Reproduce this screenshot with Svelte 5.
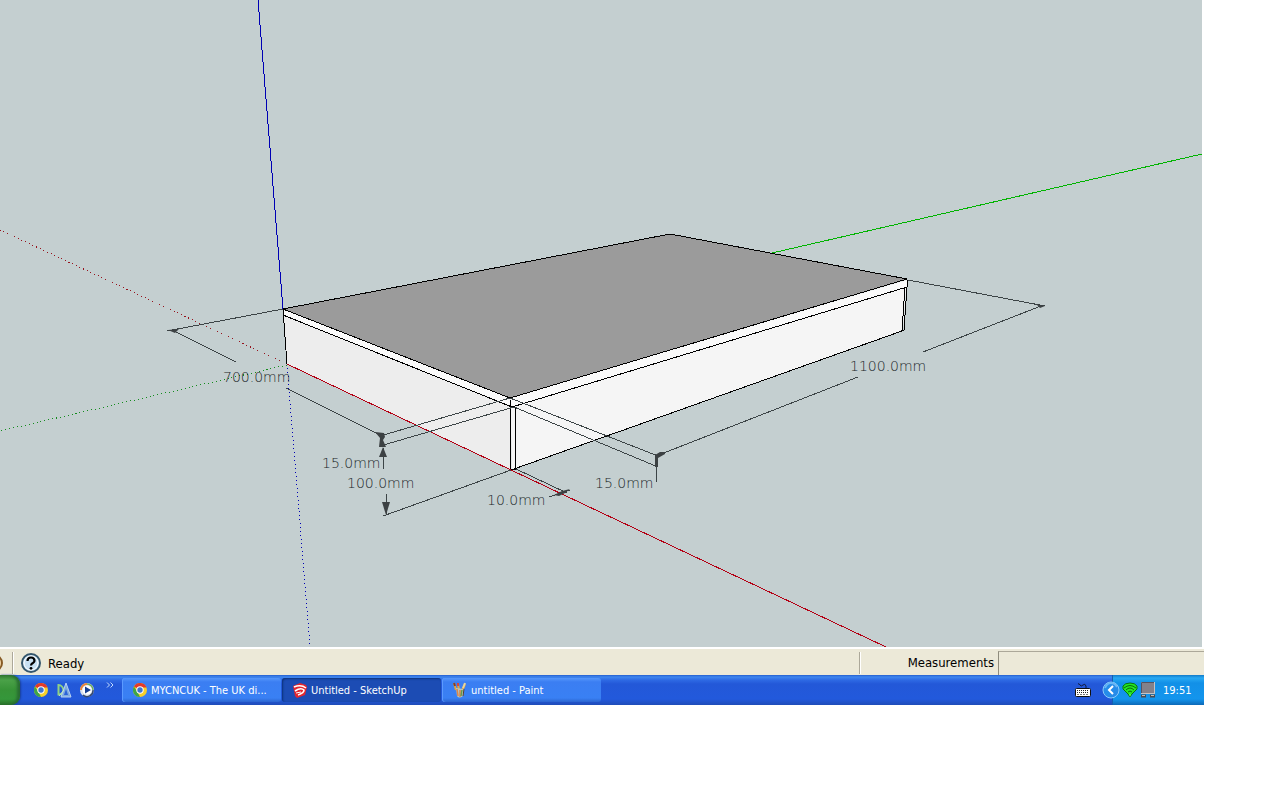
<script lang="ts">
	// measurement labels, x is the left edge and y the baseline
	const labels = [
		{ text: '700.0mm', x: 223, y: 382 },
		{ text: '15.0mm', x: 322, y: 468 },
		{ text: '100.0mm', x: 347, y: 488 },
		{ text: '10.0mm', x: 487, y: 505 },
		{ text: '15.0mm', x: 595, y: 488 },
		{ text: '1100.0mm', x: 850, y: 371 },
	];

	const edges = [
		'M283 309L670 234L907 279L510 398Z',
		'M283 315L512 407L907 287V280',
		'M283 309L287 364',
		'M510 398L511 469L516 469L515 407',
		'M514 469L902 331L905 287',
		'M901 331L904 330L907 287',
	];

	const dimensions = [
		'M283 309L167 331M172 330L236 362M286 388L380 435',
		'M510 398L380 436M514 407L380 446',
		'M382 436V446M383 448V469M386 494V514M511 470L383 516',
		'M510 398L658 456M514 407L658 467M656 456V482',
		'M516 469L567 493M549 497L570 490',
		'M656 456L858 377M923 352L1041 306M908 280L1045 306',
	];

	let tasks = [
		{ name: 'MYCNCUK - The UK di...', icon: 'chrome', active: false },
		{ name: 'Untitled - SketchUp', icon: 'sketchup', active: true },
		{ name: 'untitled - Paint', icon: 'paint', active: false },
	];
</script>

<svelte:head>
	<title>Untitled - SketchUp</title>
</svelte:head>

{#snippet icon(name)}
	<svg class="icon" viewBox="0 0 16 16" aria-hidden="true">
		{#if name === 'chrome'}
			<circle cx="8" cy="8" r="7" fill="#f6cf2b" />
			<path d="M8 8L2 4.4A7 7 0 0 1 14.6 5.5H8Z" fill="#e23a2c" />
			<path d="M2 4.4L6 11L8 15A7 7 0 0 1 2 4.4Z" fill="#3fa548" />
			<circle cx="8" cy="8" r="3.7" fill="#fff" />
			<circle cx="8" cy="8" r="2.7" fill="#3d74cf" />
		{:else if name === 'draft'}
			<path d="M2.5 3V12.5C10 13 8 3 2.5 3Z" fill="none" stroke="#8fd184" stroke-width="2" />
			<path d="M10 1L15 15H5Z" fill="#7daae0" stroke="#b8d2f2" />
			<path d="M10 7L12 13H8Z" fill="#2c63d7" />
			<path d="M3 14L8 8" stroke="#c7e8c3" />
		{:else if name === 'player'}
			<circle cx="8" cy="8" r="7" fill="#d8dfeb" />
			<path d="M2 8A6 6 0 0 1 8 2" fill="none" stroke="#e98437" stroke-width="2" />
			<path d="M8 2A6 6 0 0 1 14 8" fill="none" stroke="#6cac5a" stroke-width="1.5" />
			<path d="M14 8A6 6 0 0 1 4 13" fill="none" stroke="#35496f" stroke-width="1.5" />
			<circle cx="8" cy="8" r="4.6" fill="#fff" />
			<path d="M6 4.5L12 8L6 11.5Z" fill="#173f91" />
		{:else if name === 'sketchup'}
			<path d="M1 4L8 1L14 3L15 5L13 13L5 16L3 14L2 9Z" fill="#e3262f" />
			<path d="M2 5Q9 2 14 6" fill="none" stroke="#fff" stroke-width="1.6" />
			<path d="M3 9Q9 5 12 8Q12 11 6 13" fill="none" stroke="#fff" stroke-width="1.6" />
			<path d="M4 11L9 10" stroke="#fff" />
		{:else if name === 'paint'}
			<path d="M4 8L2 1M7 8L6 2M10 9L13 2" stroke="#e9a63b" stroke-width="2" />
			<path d="M2 1L3 4" stroke="#80402d" stroke-width="2" />
			<path d="M6 1V4" stroke="#d84539" stroke-width="2" />
			<path d="M13 1L11 6" stroke="#e9d79d" stroke-width="2" />
			<path d="M4 6L12 7L11 14Q7 17 5 14Z" fill="#b5c5bd" />
			<path d="M5 7L6 14M8 8V15" stroke="#dd8448" stroke-width="1.5" />
			<path d="M10 8L9 14" stroke="#64994d" stroke-width="1.5" />
			<path d="M12 7L11 14" stroke="#58402f" />
		{:else if name === 'keyboard'}
			<path d="M3 2Q4 1 5 3T8 3T11 4V6" fill="none" stroke="#111a3c" />
			<rect x="0.5" y="6.5" width="15" height="8" rx="1" fill="#fff" stroke="#101010" />
			<path d="M2 8.5H14M2 10.5H14" stroke="#222" stroke-dasharray="1 1" />
			<path d="M2 12.5H14" stroke="#777" stroke-dasharray="2 1" />
		{:else if name === 'wireless'}
			<path d="M8 15L6 12L1 7V4Q3 1 8 1T15 4V7L10 12Z" fill="#24e625" stroke="#08730b" />
			<path d="M2 6Q8 1 14 6M4 8Q8 4 12 8M6 10Q8 8 10 10" fill="none" stroke="#086c0b" />
			<path d="M7 12H9L8 15Z" fill="#54ff50" />
		{:else if name === 'network'}
			<rect x="1.5" y="0.5" width="13" height="11" fill="#83818a" stroke="#c5c3c5" />
			<path d="M1.5 11V0.5H14" fill="none" stroke="#555361" />
			<path d="M1 14H6M10 14H15" stroke="#4b4b51" stroke-width="3" />
			<path d="M2 13.5H5M11 13.5H14" stroke="#c1bcb4" />
		{/if}
	</svg>
{/snippet}

<div class="desktop">
	<main>
		<svg class="scene" viewBox="0 0 1202 647" role="img" aria-label="Board with dimensions">
			<g class="axes">
				<path class="blue" d="M258 0L283 309" />
				<path class="blue dotted" d="M287 364L310 646" />
				<path class="green" d="M772 253L1202 154" />
				<path class="green dotted" d="M287 365L0 431" />
				<path class="red dotted" d="M287 364L0 230" />
			</g>
			<path fill="#9b9b9b" d="M283 309L670 234L907 279L510 398Z" />
			<path fill="#ededed" d="M283 309L510 398L512 470L287 364Z" />
			<path fill="#f5f5f5" d="M510 398L907 280L903 331L512 470Z" />
			<path fill="#fafafa" d="M283 309L510 398L907 280V287L514 407L283 315Z" />
			<g class="edges">
				{#each edges as d}
					<path {d} />
				{/each}
			</g>
			<path class="red" d="M287 364L511 470L886 647" />
			<g class="dimensions">
				{#each dimensions as d}
					<path {d} />
				{/each}
			</g>
			<g class="arrows">
				<path d="M168 330L179 329L175 333Z" />
				<path d="M375 432L384 433L385 437L383 440L386 447H379L380 438Z" />
				<path d="M383 447L387 457H379Z" />
				<path d="M382 502H390L386 515Z" />
				<path d="M554 495L562 491L570 489L565 493L559 496Z" />
				<path d="M655 455L660 452H665V454L658 458V467H655Z" />
				<path d="M1036 304L1045 306L1040 308Z" />
			</g>
			{#each labels as label}
				<text x={label.x} y={label.y}>{label.text}</text>
			{/each}
		</svg>
	</main>

	<div class="status-bar">
		<svg class="hint" viewBox="0 0 8 20" aria-hidden="true">
			<circle cx="-6" cy="10" r="8" fill="#f1d4a5" stroke="#865a24" stroke-width="2" />
		</svg>
		<button class="help" aria-label="Help">
			<svg viewBox="0 0 20 20" aria-hidden="true">
				<circle cx="10" cy="10" r="9" fill="#c8e1f3" stroke="#34566c" stroke-width="2" />
				<circle cx="10" cy="10" r="7" fill="none" stroke="#fff" />
				<path d="M6.5 8Q6.5 4.5 10 4.5T13.5 8Q13.5 9 11.5 10.3Q10 11.2 10 12.5" fill="none" stroke="#000" stroke-width="2.2" />
				<circle cx="10" cy="15.3" r="1.4" />
			</svg>
		</button>
		<span class="ready">Ready</span>
		<label for="measurements">Measurements</label>
		<input id="measurements" type="text" />
	</div>

	<footer class="taskbar">
		<button class="start" aria-label="Start"></button>
		<nav class="quick-launch">
			<button aria-label="Chrome">{@render icon('chrome')}</button>
			<button aria-label="Drafting">{@render icon('draft')}</button>
			<button aria-label="Media player">{@render icon('player')}</button>
			<button class="more" aria-label="More">
				<svg viewBox="0 0 8 6" aria-hidden="true">
					<path d="M1 0.5L3.5 3L1 5.5M4.5 0.5L7 3L4.5 5.5" fill="none" stroke="#c3dcff" />
				</svg>
			</button>
		</nav>
		<div class="tasks">
			{#each tasks as task}
				<button class="task" class:active={task.active}>
					{@render icon(task.icon)}
					<span>{task.name}</span>
				</button>
			{/each}
		</div>
		<button class="keyboard" aria-label="Keyboard">{@render icon('keyboard')}</button>
		<div class="tray">
			<button class="collapse" aria-label="Hide icons">
				<svg viewBox="0 0 18 18" aria-hidden="true">
					<circle cx="9" cy="9" r="8" fill="#268ce9" stroke="#8bc9fa" />
					<path d="M3 7Q5 2 9 2T15 6" fill="none" stroke="#69b7f5" stroke-width="2" />
					<path d="M11 5L7 9L11 13" fill="none" stroke="#fff" stroke-width="2" />
				</svg>
			</button>
			{@render icon('wireless')}
			{@render icon('network')}
			<time>19:51</time>
		</div>
	</footer>
</div>

<style>
	:global(body) {
		margin: 0;
		background: #fff;
	}

	.desktop {
		margin-right: 76px;
		font-family: Tahoma, "DejaVu Sans Condensed", "DejaVu Sans", sans-serif;
		font-size: 13px;
		color: #000;
	}

	button {
		border: 0;
		padding: 0;
		background: none;
		font: inherit;
		color: inherit;
	}

	svg {
		display: block;
	}

	main {
		margin-right: 2px;
	}

	.scene {
		width: 100%;
		height: auto;
		background: #c4cfd0;
	}

	.axes path, .edges path, .dimensions path, .red {
		fill: none;
		stroke-width: 1;
		shape-rendering: crispEdges;
	}

	.axes .blue {
		stroke: #0000b4;
	}

	.axes .green {
		stroke: #00b400;
	}

	.scene .red {
		stroke: #b40014;
	}

	.axes .dotted {
		stroke-dasharray: 1 3;
	}

	.axes .red.dotted {
		stroke: #96141e;
	}

	.axes .green.dotted {
		stroke: #148c1e;
	}

	.edges path {
		stroke: #000;
	}

	.dimensions path {
		stroke: #3c4446;
	}

	.arrows {
		fill: #3c4143;
	}

	text {
		font-family: "DejaVu Sans", sans-serif;
		font-weight: 200;
		font-size: 14px;
		fill: #202628;
	}

	.status-bar {
		display: flex;
		align-items: center;
		height: 28px;
		box-sizing: border-box;
		padding-top: 2px;
		border-top: 2px solid #fff;
		background: #ece9d8;
	}

	.hint {
		width: 8px;
		height: 20px;
		margin-right: 4px;
	}

	.help {
		height: 22px;
		padding: 1px 7px 1px 8px;
		border-left: 1px solid #aca899;
		box-shadow: inset 1px 0 #fff;
	}

	.help svg {
		width: 20px;
		height: 20px;
	}

	.ready {
		flex: 1;
	}

	label {
		width: 139px;
		height: 22px;
		box-sizing: border-box;
		padding-right: 4px;
		border-left: 1px solid #aca899;
		box-shadow: inset 1px 0 #fff;
		line-height: 22px;
		text-align: right;
	}

	input {
		width: 206px;
		height: 24px;
		box-sizing: border-box;
		border: 0;
		border-top: 1px solid #aca899;
		border-left: 1px solid #8f8c7d;
		background: #ece9d8;
		font: inherit;
	}

	.taskbar {
		display: flex;
		align-items: center;
		height: 30px;
		background: linear-gradient(#245fcf 0, #3f87ef 2px, #2e6ae4 5px, #2358d8 9px, #2259dc 24px, #1f4cb8 30px);
		color: #fff;
		font-size: 11px;
	}

	.start {
		width: 20px;
		height: 30px;
		border-radius: 0 9px 9px 0;
		background: linear-gradient(#327b32, #4aa148 5px, #379337 15px, #35973b 24px, #287026);
		box-shadow: inset -3px 0 3px #286c32, 1px 0 2px #193f98;
	}

	.icon {
		flex: none;
		width: 16px;
		height: 16px;
	}

	.quick-launch {
		display: flex;
		gap: 7px;
		width: 89px;
		padding-left: 13px;
	}

	.more {
		align-self: flex-start;
		margin-left: 4px;
	}

	.more svg {
		width: 8px;
		height: 6px;
	}

	.tasks {
		display: flex;
		flex: 1;
		gap: 1px;
	}

	.task {
		display: flex;
		align-items: center;
		gap: 3px;
		flex: 0 1 159px;
		height: 24px;
		padding: 0 10px;
		border-radius: 3px;
		background: linear-gradient(#5698fb, #3b7ef2 4px, #3980f4 20px, #2c65cf);
		box-shadow: inset 1px 0 #5b9aff;
		white-space: nowrap;
	}

	.task.active {
		background: #1c4cb4;
		box-shadow: inset 1px 1px 2px #0c3179;
	}

	.keyboard {
		margin-right: 21px;
	}

	.tray {
		display: flex;
		align-items: center;
		gap: 2px;
		width: 92px;
		height: 30px;
		background: linear-gradient(#137ac8, #27a9f3 3px, #1290e7 8px, #1395ed 24px, #0d69b7);
		box-shadow: inset 1px 0 #155eae;
	}

	.collapse {
		margin-left: -10px;
	}

	.collapse svg {
		width: 18px;
		height: 18px;
	}

	time {
		margin-left: 5px;
	}
</style>
